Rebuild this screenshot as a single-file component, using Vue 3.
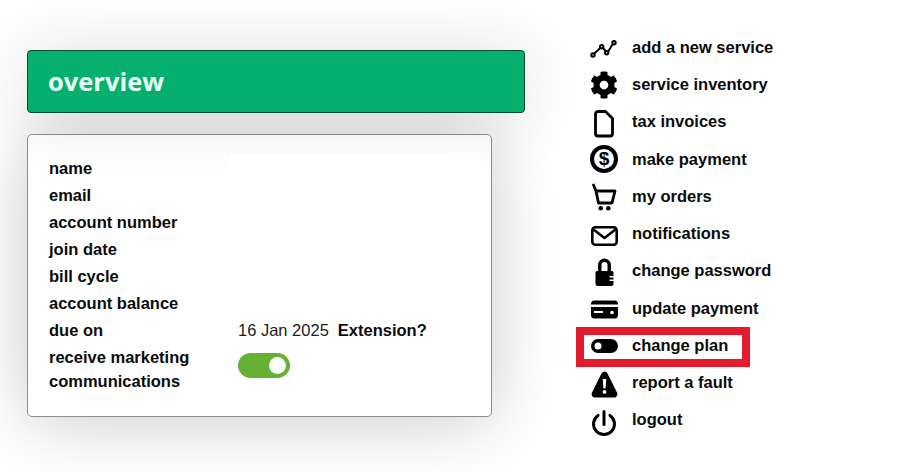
<template>
  <div class="page">
    <main class="main">
      <header class="banner">
        <h1>overview</h1>
      </header>
      <section class="card">
        <div class="blank"></div>
        <dl class="details">
          <template v-for="row in details" :key="row.label">
            <dt>{{ row.label }}</dt>
            <dd>
              <span v-if="row.value">{{ row.value }}</span>
              <a v-if="row.link" href="#" class="extension">{{ row.link }}</a>
            </dd>
          </template>
          <dt class="tall">receive marketing<br />communications</dt>
          <dd class="tall">
            <span class="toggle"><span class="knob"></span></span>
          </dd>
        </dl>
      </section>
    </main>

    <nav class="menu">
      <a href="#" class="item">
        <svg class="icon" viewBox="0 0 28 28" fill="none" stroke="#000" stroke-width="2" stroke-linecap="round">
          <path d="M4.300 20.500l6-5.500M13 15l2.500 3M18.500 18l4-6.500" />
          <circle cx="3" cy="22" r="1.700" />
          <circle cx="11.700" cy="13.700" r="1.700" />
          <circle cx="16.700" cy="19.700" r="1.700" />
          <circle cx="24" cy="9.700" r="1.700" />
        </svg>
        add a new service
      </a>
      <a href="#" class="item">
        <svg class="icon" viewBox="0 0 512 512">
          <path d="M487.4 315.700l-42.600-24.600c4.300-23.200 4.300-47 0-70.200l42.600-24.600c4.900-2.800 7.100-8.600 5.500-14-11.100-35.600-30-67.800-54.700-94.600-3.800-4.100-10-5.100-14.800-2.300L380.800 110c-17.900-15.400-38.500-27.300-60.800-35.100V25.800c0-5.600-3.900-10.500-9.400-11.700-36.700-8.200-74.300-7.800-109.200 0-5.500 1.200-9.400 6.100-9.400 11.700V75c-22.200 7.900-42.800 19.800-60.800 35.100L88.700 85.500c-4.900-2.800-11-1.900-14.800 2.300-24.700 26.700-43.600 58.900-54.700 94.600-1.700 5.400.6 11.200 5.500 14L67.300 221c-4.300 23.200-4.300 47 0 70.200l-42.600 24.600c-4.900 2.800-7.100 8.600-5.500 14 11.100 35.600 30 67.800 54.700 94.600 3.800 4.100 10 5.100 14.800 2.300l42.600-24.600c17.900 15.400 38.500 27.300 60.800 35.100v49.200c0 5.600 3.900 10.500 9.400 11.700 36.700 8.200 74.300 7.800 109.200 0 5.500-1.200 9.400-6.100 9.400-11.700v-49.200c22.200-7.900 42.800-19.800 60.800-35.100l42.600 24.600c4.900 2.800 11 1.900 14.800-2.300 24.700-26.700 43.600-58.900 54.700-94.600 1.500-5.500-.7-11.300-5.600-14.100zM256 336c-44.100 0-80-35.900-80-80s35.900-80 80-80 80 35.900 80 80-35.900 80-80 80z" />
        </svg>
        service inventory
      </a>
      <a href="#" class="item">
        <svg class="icon" viewBox="0 0 28 28" fill="none" stroke="#000" stroke-width="2.800" stroke-linejoin="round">
          <path d="M8 3.500h7.500l7 7v15a2.500 2.500 0 0 1-2.500 2.500H8a2.500 2.500 0 0 1-2.500-2.500V6A2.500 2.500 0 0 1 8 3.500z" />
        </svg>
        tax invoices
      </a>
      <a href="#" class="item">
        <span class="dollar">$</span>
        make payment
      </a>
      <a href="#" class="item">
        <svg class="icon" viewBox="0 0 28 28" fill="none" stroke="#000" stroke-width="2.800" stroke-linejoin="round" stroke-linecap="round">
          <path d="M3.500 3l2.500 6 2.500 12h13.500l3-12H6" />
          <circle cx="10.700" cy="26.300" r="2.300" fill="#000" stroke="none" />
          <circle cx="18.300" cy="26.300" r="2.300" fill="#000" stroke="none" />
        </svg>
        my orders
      </a>
      <a href="#" class="item">
        <svg class="icon" viewBox="0 0 28 28" fill="none" stroke="#000" stroke-width="2.600" stroke-linejoin="round">
          <rect x="2.300" y="7.300" width="24.400" height="17.400" rx="3" />
          <path d="M3.500 9.500l11 8.500 11-8.500" />
        </svg>
        notifications
      </a>
      <a href="#" class="item">
        <svg class="icon" viewBox="0 0 28 28">
          <path d="M9.800 14V8a4.700 4.700 0 0 1 9.400 0v6" fill="none" stroke="#000" stroke-width="3.400" />
          <path d="M7 14h15a1.500 1.500 0 0 1 1.500 1.500V19h-4v1.500h4v2h-4V24h4v2.500A2.500 2.500 0 0 1 21 29H8a2.500 2.500 0 0 1-2.500-2.500v-11A1.500 1.500 0 0 1 7 14z" />
        </svg>
        change password
      </a>
      <a href="#" class="item">
        <svg class="icon" viewBox="0 0 28 28">
          <path d="M4.500 6.500h20A3.500 3.500 0 0 1 28 10v.5H1V10a3.500 3.500 0 0 1 3.500-3.500z" />
          <path fill-rule="evenodd" d="M1 13h27v8a3.500 3.500 0 0 1-3.500 3.500h-20A3.500 3.500 0 0 1 1 21zM4 17v2h9v-2zM22 16.700a1.800 1.800 0 1 0 0 3.600 1.800 1.800 0 0 0 0-3.600z" />
        </svg>
        update payment
      </a>
      <a href="#" class="item highlighted">
        <svg class="icon" viewBox="0 0 28 28">
          <path fill-rule="evenodd" d="M8 8h13a7 7 0 0 1 0 14H8A7 7 0 0 1 8 8zm0 3.500a3.500 3.500 0 1 0 0 7 3.500 3.500 0 0 0 0-7z" />
        </svg>
        change plan
      </a>
      <a href="#" class="item">
        <svg class="icon" viewBox="0 0 28 28">
          <path d="M14.500 2.500c1.300 0 2.300.7 3 2l9.500 19c1.100 2.200-.2 5-3 5H5c-2.800 0-4.100-2.800-3-5l9.500-19c.7-1.300 1.700-2 3-2z" />
          <path d="M12.700 10h3.600l-.7 9.500h-2.200zM14.500 21a1.900 1.900 0 1 1 0 3.800 1.900 1.900 0 0 1 0-3.800z" fill="#fff" />
        </svg>
        report a fault
      </a>
      <a href="#" class="item">
        <svg class="icon" viewBox="0 0 28 28" fill="none" stroke="#000" stroke-width="3" stroke-linecap="round">
          <path d="M8 9.400A10.500 10.500 0 1 0 20 9.400" />
          <path d="M14 5.500v13" />
        </svg>
        logout
      </a>
    </nav>
  </div>
</template>

<script setup>
const details = [
  { label: 'name' },
  { label: 'email' },
  { label: 'account number' },
  { label: 'join date' },
  { label: 'bill cycle' },
  { label: 'account balance' },
  { label: 'due on', value: '16 Jan 2025', link: 'Extension?' },
];
</script>

<style>
html,
body {
  margin: 0;
  background: #fff;
}
</style>

<style scoped>
.page {
  display: flex;
  width: 904px;
  height: 472px;
  overflow: hidden;
  background: #fff;
  color: #0b0b0b;
  font-family: "Liberation Sans", Arial, sans-serif;
  font-size: 16.5px;
}

.main {
  width: 498px;
  margin: 50px 0 0 27px;
  flex: none;
}

.banner {
  position: relative;
  z-index: 1;
  box-sizing: border-box;
  height: 63px;
  padding: 0 0 2px 20px;
  display: flex;
  align-items: center;
  background: #05b06f;
  border: 1px solid #0c4a33;
  border-radius: 4px;
  box-shadow: 0 2px 70px rgba(0, 0, 0, 0.14);
}

.banner h1 {
  margin: 0;
  font-family: "Open Sans", sans-serif;
  font-size: 25.5px;
  font-weight: 700;
  color: #e9fff6;
}

.card {
  position: relative;
  box-sizing: border-box;
  width: 465px;
  height: 283px;
  margin-top: 21px;
  padding: 20px 21px;
  background: #fff;
  border: 1px solid #8f8f8f;
  border-radius: 5px;
  box-shadow: 0 4px 70px rgba(0, 0, 0, 0.21);
}

/* blanked-out values sit over the banner's shadow */
.blank {
  position: absolute;
  z-index: 2;
  left: 201px;
  top: 18px;
  width: 251px;
  height: 40px;
  background: #fff;
}

.details {
  display: grid;
  grid-template-columns: 189px 1fr;
  grid-auto-rows: 27px;
  margin: 0;
  line-height: 27px;
}

.details dt {
  font-weight: 700;
}

.details dd {
  margin: 0;
  color: #222;
}

.details .tall {
  grid-row: span 2;
  line-height: 24px;
}

.details dt.tall {
  padding-top: 1px;
}

.details dd.tall {
  padding-top: 9px;
}

.extension {
  margin-left: 9px;
  color: #0b0b0b;
  font-weight: 700;
  text-decoration: none;
}

.toggle {
  display: block;
  position: relative;
  width: 52px;
  height: 25px;
  border-radius: 13px;
  background: #66b034;
}

.knob {
  position: absolute;
  top: 4px;
  right: 4px;
  width: 17px;
  height: 17px;
  border-radius: 50%;
  background: #fff;
}

.menu {
  margin: 28.7px 0 0 65px;
  display: flex;
  flex-direction: column;
}

.item {
  position: relative;
  height: 37.25px;
  display: flex;
  align-items: center;
  gap: 14px;
  color: #0b0b0b;
  font-weight: 700;
  white-space: nowrap;
  text-decoration: none;
}

.icon {
  width: 28px;
  height: 28px;
  flex: none;
  overflow: visible;
}

.dollar {
  box-sizing: border-box;
  width: 28px;
  height: 28px;
  flex: none;
  border: 4px solid #000;
  border-radius: 50%;
  text-align: center;
  line-height: 20px;
  font-size: 19px;
  color: #000;
}

.highlighted::after {
  content: "";
  position: absolute;
  left: -14px;
  top: 0;
  width: 174px;
  height: 40px;
  box-sizing: border-box;
  border: 8px solid #e21c2c;
}
</style>
